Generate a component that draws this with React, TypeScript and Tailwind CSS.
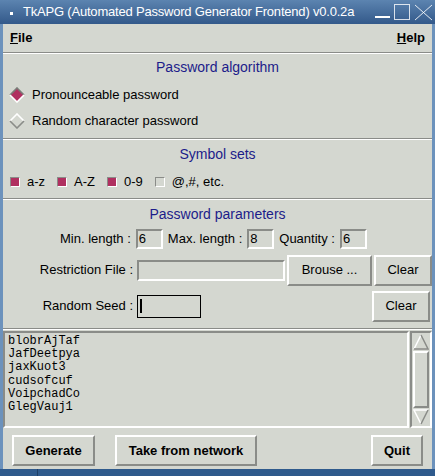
import React from "react";

const raised = "border-2 border-t-white border-l-white border-b-[#8a8c88] border-r-[#8a8c88]";
const sunken = "border-2 border-t-[#8a8c88] border-l-[#8a8c88] border-b-white border-r-white";

function Groove() {
  return (
    <div className="flex flex-col">
      <div className="h-px bg-[#8a8c88]" />
      <div className="h-px bg-white" />
    </div>
  );
}

function SectionTitle({ children }: { children: React.ReactNode }) {
  return <div className="text-center text-[14px] leading-[16px] text-[#1c1c8a]">{children}</div>;
}

function Diamond({ on }: { on: boolean }) {
  return (
    <svg width="16" height="16" viewBox="0 0 16 16">
      <polygon points="8,1 15,8 8,15 1,8" fill={on ? "#b03060" : "#d4d7d0"} />
      <polyline points="1,8 8,1 15,8" fill="none" stroke={on ? "#7a7c78" : "#ffffff"} strokeWidth="1.6" />
      <polyline points="1,8 8,15 15,8" fill="none" stroke={on ? "#ffffff" : "#8a8c88"} strokeWidth="1.6" />
    </svg>
  );
}

function Check({ on, label }: { on: boolean; label: string }) {
  return (
    <div className="flex items-center gap-[7px] mr-[12px]">
      <div
        className={
          "w-[10px] h-[10px] border border-t-[#8a8c88] border-l-[#8a8c88] border-b-white border-r-white " +
          (on ? "bg-[#b03060]" : "bg-[#d4d7d0]")
        }
      />
      <span>{label}</span>
    </div>
  );
}

function Entry({ value, w }: { value: string; w: string }) {
  return (
    <div className={sunken + " h-[20px] flex items-center pl-[1px] text-[13px] " + w}>{value}</div>
  );
}

export default function App() {
  const words = ["blobrAjTaf", "JafDeetpya", "jaxKuot3", "cudsofcuf", "VoipchadCo", "GlegVauj1"];
  return (
    <div
      className="w-[435px] h-[476px] flex flex-col overflow-hidden text-[13px] text-black"
      style={{ fontFamily: '"Liberation Sans", Arial, sans-serif' }}
    >
      {/* title bar */}
      <div className="h-[24px] flex items-center bg-gradient-to-b from-[#5c84b0] to-[#33598a] text-white">
        <div className="w-[3px] h-[3px] bg-white ml-[10px] mr-[10px] mt-[3px] shrink-0" />
        <span className="text-[13px] leading-[16px] whitespace-nowrap tracking-[-0.2px]">
          TkAPG (Automated Password Generator Frontend) v0.0.2a
        </span>
        <div className="ml-auto flex items-center gap-[4px] pr-[2px] shrink-0">
          <div className="w-[15px] h-[16px] flex items-end pb-[2px]">
            <div className="w-full h-[2px] bg-white" />
          </div>
          <div className="w-[16px] h-[16px] border border-white/80" />
          <svg width="19" height="17" viewBox="0 0 19 17">
            <path d="M1 1 L18 16 M18 1 L1 16" stroke="#ffffff" strokeOpacity="0.85" strokeWidth="1" />
          </svg>
        </div>
      </div>

      <div className="flex-1 flex flex-col bg-[#d4d7d0] border-l-[3px] border-r-[3px] border-[#6c92bc]">
        {/* menu */}
        <div className="h-[28px] flex items-center justify-between px-[7px] font-bold text-[13px]">
          <span>
            <span className="underline">F</span>ile
          </span>
          <span>
            <span className="underline">H</span>elp
          </span>
        </div>
        <Groove />

        {/* algorithm */}
        <div className="h-[84px] flex flex-col pt-[5px]">
          <SectionTitle>Password algorithm</SectionTitle>
          <div className="h-[26px] mt-[7px] flex items-center pl-[6px] gap-[7px]">
            <Diamond on={true} />
            <span>Pronounceable password</span>
          </div>
          <div className="h-[26px] flex items-center pl-[6px] gap-[7px]">
            <Diamond on={false} />
            <span>Random character password</span>
          </div>
        </div>
        <Groove />

        {/* symbol sets */}
        <div className="h-[58px] flex flex-col pt-[6px]">
          <SectionTitle>Symbol sets</SectionTitle>
          <div className="h-[24px] mt-[8px] flex items-center pl-[7px]">
            <Check on={true} label="a-z" />
            <Check on={true} label="A-Z" />
            <Check on={true} label="0-9" />
            <Check on={false} label="@,#, etc." />
          </div>
        </div>
        <Groove />

        {/* parameters */}
        <div className="h-[128px] flex flex-col pt-[6px]">
          <SectionTitle>Password parameters</SectionTitle>
          <div className="h-[24px] mt-[5px] flex items-center pl-[57px] gap-[5px]">
            <span>Min. length :</span>
            <Entry value="6" w="w-[27px]" />
            <span>Max. length :</span>
            <Entry value="8" w="w-[27px]" />
            <span>Quantity :</span>
            <Entry value="6" w="w-[27px]" />
          </div>
          <div className="h-[32px] mt-[3px] flex items-center">
            <span className="w-[130px] text-right">Restriction File :</span>
            <div className={sunken + " w-[148px] h-[21px] ml-[4px]"} />
            <button className={raised + " w-[85px] h-[31px] ml-[2px] bg-[#d4d7d0]"}>Brouse ...</button>
            <button className={raised + " w-[58px] h-[31px] ml-[2px] bg-[#d4d7d0]"}>Clear</button>
          </div>
          <div className="h-[32px] mt-[4px] flex items-center">
            <span className="w-[130px] text-right">Random Seed :</span>
            <div className="w-[64px] h-[23px] ml-[4px] border border-black flex items-center">
              <div className="w-[2px] h-[14px] bg-black ml-[2px]" />
            </div>
            <button className={raised + " w-[58px] h-[31px] ml-auto mr-[2px] bg-[#d4d7d0]"}>Clear</button>
          </div>
        </div>
        <Groove />

        {/* output */}
        <div className="h-[97px] mt-[1px] flex">
          <div
            className={sunken + " flex-1 pl-[3px] pt-[2px] text-[12px] leading-[13.2px]"}
            style={{ fontFamily: '"Liberation Mono", "Courier New", monospace' }}
          >
            {words.map((w) => (
              <div key={w}>{w}</div>
            ))}
          </div>
          <div className={sunken + " w-[22px] ml-[1px] flex flex-col"}>
            <div className="h-[18px] flex items-center justify-center">
              <svg width="16" height="16" viewBox="0 0 16 16">
                <polygon points="8,1 15,15 1,15" fill="#d4d7d0" />
                <polyline points="1,15 8,1" stroke="#ffffff" strokeWidth="1.5" fill="none" />
                <polyline points="8,1 15,15 1,15" stroke="#8a8c88" strokeWidth="1.5" fill="none" />
              </svg>
            </div>
            <div className={raised + " flex-1 mx-[1px]"} />
            <div className="h-[18px] flex items-center justify-center">
              <svg width="16" height="16" viewBox="0 0 16 16">
                <polygon points="1,1 15,1 8,15" fill="#d4d7d0" />
                <polyline points="8,15 1,1 15,1" stroke="#ffffff" strokeWidth="1.5" fill="none" />
                <polyline points="15,1 8,15" stroke="#8a8c88" strokeWidth="1.5" fill="none" />
              </svg>
            </div>
          </div>
        </div>

        {/* bottom buttons */}
        <div className="flex-1 flex items-center px-[9px] pt-[4px] font-bold">
          <button className={raised + " w-[83px] h-[31px] bg-[#d4d7d0]"}>Generate</button>
          <button className={raised + " w-[142px] h-[31px] ml-[20px] bg-[#d4d7d0]"}>Take from network</button>
          <button className={raised + " w-[52px] h-[31px] ml-auto bg-[#d4d7d0]"}>Quit</button>
        </div>
      </div>
      <div className="h-[7px] flex bg-[#2f5a8c]">
        <div className="w-[38px] border-r border-[#1e3f66]" />
      </div>
    </div>
  );
}
